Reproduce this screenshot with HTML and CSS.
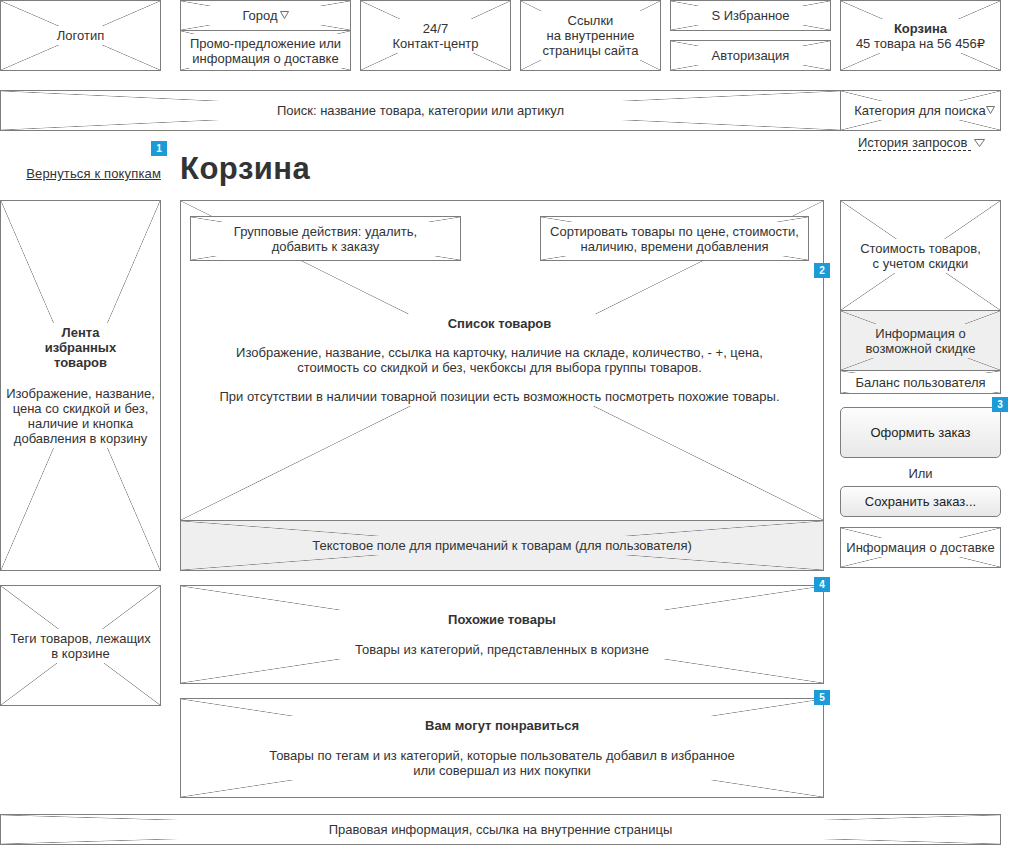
FILE: index.html
```html
<!DOCTYPE html>
<html lang="ru">
<head>
<meta charset="utf-8">
<title>Корзина — прототип</title>
<link rel="stylesheet" href="styles.css">
</head>
<body>
<div class="page">
  <header class="top">
    <div class="box x logo"><span class="lbl">Логотип</span></div>
    <div class="stack city">
      <div class="box x city-sel"><span class="lbl">Город<svg class="tri" width="9" height="8" viewBox="0 0 9 8"><path d="M0.5 0.5H8.5L4.5 7.5Z"/></svg></span></div>
      <div class="box x promo"><span class="lbl">Промо-предложение или<br>информация о доставке</span></div>
    </div>
    <div class="box x contact"><span class="lbl">24/7<br>Контакт-центр</span></div>
    <div class="box x links"><span class="lbl">Ссылки<br>на внутренние<br>страницы сайта</span></div>
    <div class="stack fav">
      <div class="box x half"><span class="lbl">S Избранное</span></div>
      <div class="box x half"><span class="lbl">Авторизация</span></div>
    </div>
    <div class="box x cart"><span class="lbl"><b>Корзина</b><br>45 товара на 56 456₽</span></div>
  </header>

  <div class="search">
    <div class="x search-main"><span class="lbl">Поиск: название товара, категории или артикул</span></div>
    <div class="x search-cat"><span class="lbl">Категория для поиска<svg class="tri tri-cat" width="9" height="8" viewBox="0 0 9 8"><path d="M0.5 0.5H8.5L4.5 7.5Z"/></svg></span></div>
  </div>

  <div class="history-row">
    <span class="history">История запросов&nbsp;</span><svg class="tri tri-hist" width="11" height="8" viewBox="0 0 11 8"><path d="M0.5 0.5H10.5L5.5 7.5Z"/></svg>
  </div>

  <div class="title-row">
    <div class="back-cell">
      <a class="back" href="#">Вернуться к покупкам</a>
      <span class="badge b1">1</span>
    </div>
    <h1 class="title">Корзина</h1>
  </div>

  <main class="main">
    <div class="box x favfeed">
      <span class="lbl">
        <b class="lbl-title">Лента<br>избранных<br>товаров</b>
        <span class="lbl-text">Изображение, название,<br>цена со скидкой и без,<br>наличие и кнопка<br>добавления в корзину</span>
      </span>
    </div>

    <section class="list">
      <div class="x list-main">
        <div class="list-top">
          <div class="box x ibox ibox-group"><span class="lbl">Групповые действия: удалить,<br>добавить к заказу</span></div>
          <div class="box x ibox ibox-sort"><span class="lbl">Сортировать товары по цене, стоимости,<br>наличию, времени добавления</span></div>
        </div>
        <div class="lbl list-lbl">
          <b class="lbl-title">Список товаров</b>
          <p class="lbl-text">Изображение, название, ссылка на карточку, наличие на складе, количество, - +, цена,<br>стоимость со скидкой и без, чекбоксы для выбора группы товаров.</p>
          <p class="lbl-text">При отсутствии в наличии товарной позиции есть возможность посмотреть похожие товары.</p>
        </div>
      </div>
      <div class="x grey notes"><span class="lbl">Текстовое поле для примечаний к товарам (для пользователя)</span></div>
      <span class="badge b2">2</span>
    </section>

    <aside class="side">
      <div class="summary">
        <div class="x cell cost"><span class="lbl">Стоимость товаров,<br>с учетом скидки</span></div>
        <div class="x grey cell discount"><span class="lbl">Информация о<br>возможной скидке</span></div>
        <div class="x cell balance"><span class="lbl">Баланс пользователя</span></div>
      </div>
      <div class="btn-wrap">
        <button class="btn btn-main" type="button">Оформить заказ</button>
        <span class="badge b3">3</span>
      </div>
      <div class="or">Или</div>
      <button class="btn btn-save" type="button">Сохранить заказ...</button>
      <div class="box x delivery"><span class="lbl">Информация о доставке</span></div>
    </aside>

    <div class="box x tags"><span class="lbl">Теги товаров, лежащих<br>в корзине</span></div>

    <section class="box x similar">
      <span class="lbl">
        <b class="lbl-title">Похожие товары</b>
        <span class="lbl-text">Товары из категорий, представленных в коризне</span>
      </span>
      <span class="badge b4">4</span>
    </section>

    <section class="box x like">
      <span class="lbl">
        <b class="lbl-title">Вам могут понравиться</b>
        <span class="lbl-text">Товары по тегам и из категорий, которые пользователь добавил в избранное<br>или совершал из них покупки</span>
      </span>
      <span class="badge b5">5</span>
    </section>
  </main>

  <footer class="box x footer"><span class="lbl">Правовая информация, ссылка на внутренние страницы</span></footer>
</div>
</body>
</html>
```

FILE: styles.css
```css
* {
  box-sizing: border-box;
}

html,
body {
  margin: 0;
  padding: 0;
  background: #fff;
}

body {
  font-family: "Liberation Sans", Arial, "DejaVu Sans", sans-serif;
  font-size: 13px;
  line-height: 15px;
  color: #333;
}

.page {
  width: 1001px;
}

/* wireframe placeholder boxes */
.box {
  border: 1px solid #7d7d7d;
  display: flex;
  align-items: center;
  justify-content: center;
  text-align: center;
}

.x {
  background-color: #fff;
  background-image:
    linear-gradient(to top right, transparent calc(50% - 0.65px), #8a8a8a 50%, transparent calc(50% + 0.65px)),
    linear-gradient(to bottom right, transparent calc(50% - 0.65px), #8a8a8a 50%, transparent calc(50% + 0.65px));
}

.x.grey {
  background-color: #efefef;
}

/* label strip: spans the full width of its box and hides the cross behind the text */
.lbl {
  display: block;
  width: 100%;
  background: #fff;
  padding: 2px 0;
  text-align: center;
}

.grey .lbl {
  background: #efefef;
}

.lbl-title {
  display: block;
  font-weight: bold;
}

.lbl-text {
  display: block;
  margin: 0;
}

.tri {
  display: inline-block;
  vertical-align: 1px;
  margin-left: 2px;
}

.tri path {
  fill: none;
  stroke: #707070;
  stroke-width: 1;
}

/* header */
.top {
  display: flex;
  gap: 9px;
  height: 71px;
}

.logo {
  width: 161px;
  margin-right: 10px;
}

.stack {
  display: flex;
  flex-direction: column;
}

.city {
  width: 171px;
}

.city-sel {
  height: 31px;
}

.promo {
  flex: 1;
  margin-top: -1px;
}

.contact {
  width: 151px;
}

.links {
  width: 141px;
}

.fav {
  width: 161px;
  justify-content: space-between;
}

.half {
  height: 31px;
}

.cart {
  width: 161px;
}

/* search */
.search {
  margin-top: 19px;
  height: 41px;
  border: 1px solid #7d7d7d;
  display: flex;
}

.search-main {
  flex: 1;
  display: flex;
  align-items: center;
  justify-content: center;
}

.search-cat {
  width: 160px;
  border-left: 1px solid #7d7d7d;
  display: flex;
  align-items: center;
  justify-content: center;
}

.tri-cat {
  margin-left: 0;
  margin-right: -8px;
}

/* history + title */
.history-row {
  display: flex;
  justify-content: flex-end;
  align-items: center;
  margin-top: 4px;
  padding-right: 16px;
  height: 16px;
}

.history {
  border-bottom: 1px dashed #333;
  line-height: 15px;
}

.tri-hist {
  margin-left: 3px;
  vertical-align: middle;
}

.title-row {
  display: flex;
  align-items: flex-start;
  height: 49px;
}

.back-cell {
  position: relative;
  width: 161px;
  margin-right: 19px;
  padding-top: 15px;
  text-align: right;
}

.back {
  color: #333;
  text-decoration: underline;
  letter-spacing: 0.15px;
}

.title {
  margin: 1px 0 0;
  font-size: 31px;
  line-height: 34px;
  letter-spacing: 0.5px;
  font-weight: bold;
  color: #333;
}

/* badges */
.badge {
  position: absolute;
  width: 16px;
  height: 15px;
  background: #1b9bd8;
  color: #fff;
  font-size: 10px;
  line-height: 15px;
  font-weight: bold;
  text-align: center;
}

.b1 {
  top: -10px;
  right: -6px;
}

.b2 {
  top: 62px;
  right: -7px;
}

.b3 {
  top: -10px;
  right: -7px;
}

.b4,
.b5 {
  top: -9px;
  right: -7px;
}

/* main grid */
.main {
  display: grid;
  grid-template-columns: 161px 19px 644px 16px 161px;
  grid-template-rows: 371px 99px 100px;
  row-gap: 14px;
  grid-template-areas:
    "fav . list . side"
    "tags . similar . ."
    "tags . like . .";
}

.favfeed {
  grid-area: fav;
}

.lbl-title + .lbl-text {
  margin-top: 16px;
}

.tags {
  grid-area: tags;
  align-self: start;
  height: 121px;
}

.list {
  grid-area: list;
  position: relative;
  border: 1px solid #7d7d7d;
  display: flex;
  flex-direction: column;
}

.list-main {
  flex: 1;
  display: flex;
  flex-direction: column;
  padding: 15px 14px 0 9px;
}

.list-top {
  display: flex;
  justify-content: space-between;
}

.ibox {
  height: 45px;
}

.ibox-group {
  width: 271px;
}

.ibox-sort {
  width: 269px;
}

.list-lbl {
  margin-top: 53px;
  padding: 2px 0 2px;
}

.list-lbl .lbl-text {
  margin-top: 14px;
}

.notes {
  height: 50px;
  border-top: 1px solid #7d7d7d;
  display: flex;
  align-items: center;
  justify-content: center;
}

.similar {
  grid-area: similar;
  position: relative;
}

.like {
  grid-area: like;
  position: relative;
}

.similar .lbl-title + .lbl-text,
.like .lbl-title + .lbl-text {
  margin-top: 15px;
}

/* right column */
.side {
  grid-area: side;
  align-self: start;
  display: flex;
  flex-direction: column;
}

.summary {
  border: 1px solid #7d7d7d;
  display: flex;
  flex-direction: column;
}

.cell {
  display: flex;
  align-items: center;
  justify-content: center;
  text-align: center;
}

.cost {
  height: 109px;
}

.discount {
  height: 60px;
  border-top: 1px solid #7d7d7d;
}

.balance {
  height: 23px;
  border-top: 1px solid #7d7d7d;
}

.btn-wrap {
  position: relative;
  margin-top: 13px;
}

.btn {
  display: block;
  width: 100%;
  margin: 0;
  padding: 0;
  border: 1px solid #7d7d7d;
  border-radius: 5px;
  background: linear-gradient(#fdfdfd, #e8e8e8);
  font-family: "Liberation Sans", Arial, sans-serif;
  font-size: 13px;
  line-height: 15px;
  color: #222;
  text-align: center;
}

.btn-main {
  height: 51px;
}

.or {
  margin-top: 8px;
  text-align: center;
  line-height: 15px;
}

.btn-save {
  margin-top: 5px;
  height: 31px;
}

.delivery {
  margin-top: 10px;
  height: 41px;
}

/* footer */
.footer {
  margin-top: 16px;
  height: 31px;
}
```
